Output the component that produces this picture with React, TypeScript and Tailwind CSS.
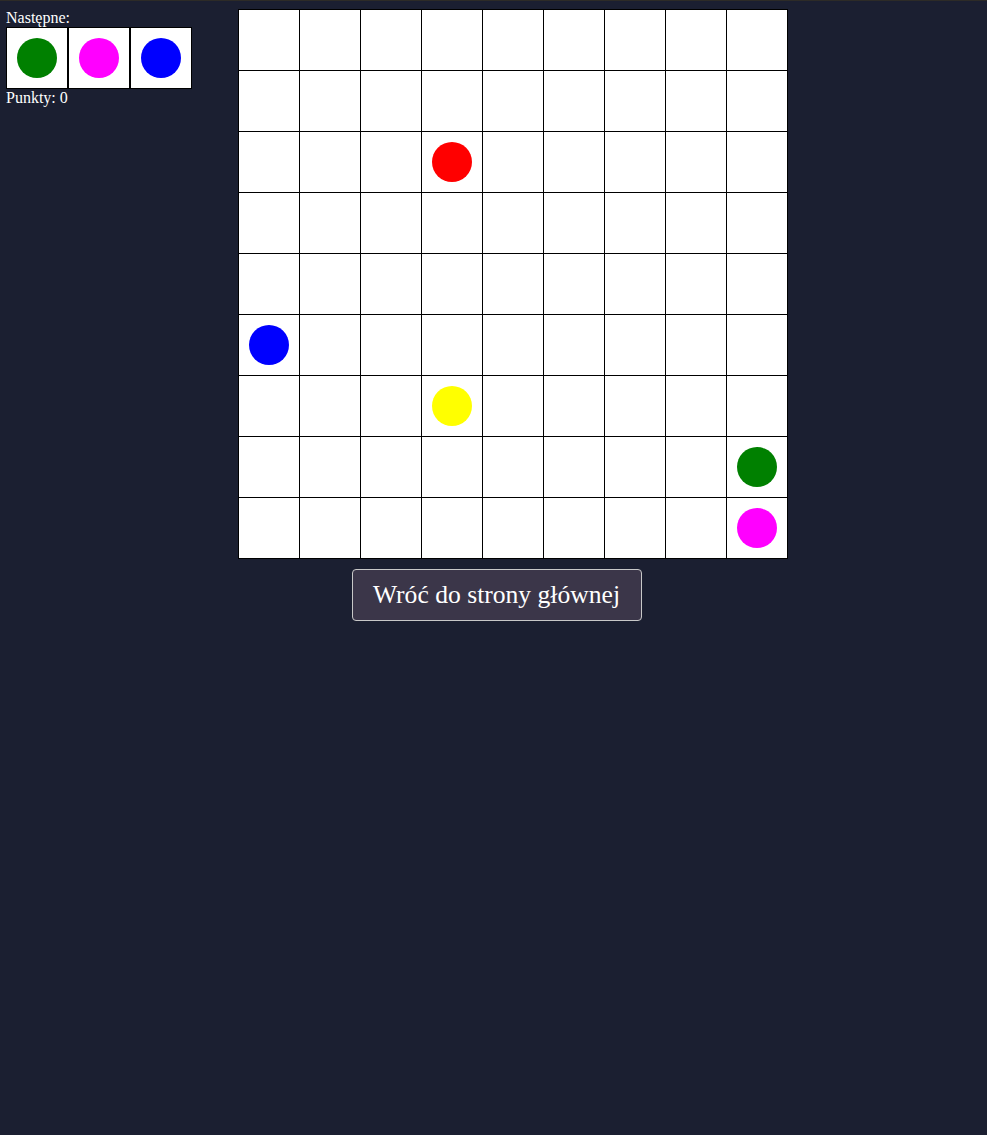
import React from 'react';

const SIZE = 9;

// positions of balls on the board: "row-col" -> colour
const balls: Record<string, string> = {
  '2-3': 'bg-[#ff0000]',
  '5-0': 'bg-[#0000ff]',
  '6-3': 'bg-[#ffff00]',
  '7-8': 'bg-[#008000]',
  '8-8': 'bg-[#ff00ff]',
};

const next = ['bg-[#008000]', 'bg-[#ff00ff]', 'bg-[#0000ff]'];

export default function App() {
  const cells = [];
  for (let r = 0; r < SIZE; r++) {
    for (let c = 0; c < SIZE; c++) {
      const ball = balls[`${r}-${c}`];
      cells.push(
        <div key={`${r}-${c}`} className="w-[60px] h-[60px] bg-white flex items-center justify-center">
          {ball && <span className={`w-10 h-10 rounded-full ${ball}`} />}
        </div>
      );
    }
  }

  return (
    <div
      className="min-h-screen bg-[#1b1f31] border-t border-[#2d2b27] text-white pt-2"
      style={{ fontFamily: '"Liberation Serif", serif' }}
    >
      <div className="flex">
        {/* Left panel: next balls + score */}
        <div className="w-[238px] pl-[6px] text-base leading-[18px]">
          <div>Następne:</div>
          <div className="flex">
            {next.map((color, i) => (
              <div key={i} className="w-[62px] h-[62px] bg-white border border-black flex items-center justify-center">
                <span className={`w-10 h-10 rounded-full ${color}`} />
              </div>
            ))}
          </div>
          <div>Punkty: 0</div>
        </div>

        {/* Board */}
        <div className="grid grid-cols-[repeat(9,60px)] gap-px p-px bg-black self-start">
          {cells}
        </div>
      </div>

      <div className="flex justify-center pl-[6px] mt-[10px]">
        <button className="h-[52px] w-[290px] bg-[#3b3649] border border-[#c8c8c8] rounded-[4px] text-[25.6px] text-white">
          Wróć do strony głównej
        </button>
      </div>
    </div>
  );
}
